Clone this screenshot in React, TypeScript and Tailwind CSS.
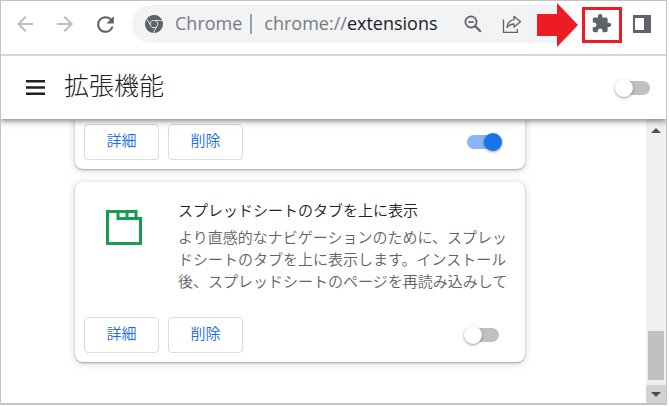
import { MdArrowBack, MdArrowForward, MdExtension, MdRefresh } from "react-icons/md";

const extension = {
  name: "スプレッドシートのタブを上に表示",
  description:
    "より直感的なナビゲーションのために、スプレッドシートのタブを上に表示します。インストール後、スプレッドシートのページを再読み込みして",
};

function ChromeIcon() {
  return (
    <svg viewBox="0 0 24 24" className="size-[18px] shrink-0 fill-[#5f6368]" aria-hidden="true">
      <path d="M12 0C8.21 0 4.831 1.757 2.632 4.501l3.953 6.848A5.454 5.454 0 0 1 12 6.545h10.691A12 12 0 0 0 12 0zM1.931 5.47A11.943 11.943 0 0 0 0 12c0 6.012 4.42 10.991 10.189 11.864l3.953-6.847a5.45 5.45 0 0 1-6.865-2.29zm13.342 2.166a5.446 5.446 0 0 1 1.45 7.09l.002.001h-.002l-5.344 9.257c.206.01.413.016.621.016 6.627 0 12-5.373 12-12 0-1.54-.29-3.011-.818-4.364zM12 16.364a4.364 4.364 0 1 1 0-8.728 4.364 4.364 0 0 1 0 8.728Z" />
    </svg>
  );
}

function ZoomOutIcon() {
  return (
    <svg viewBox="0 0 18 18" className="size-[18px]" fill="none" stroke="#5f6368" strokeWidth="1.7" aria-hidden="true">
      <circle cx="7" cy="7" r="5.6" />
      <path d="M4.300 7h5.400" />
      <path d="M11 11l5.800 5.800" strokeWidth="2.2" />
    </svg>
  );
}

function ShareIcon() {
  return (
    <svg viewBox="0 0 20 20" className="size-5" fill="none" stroke="#5f6368" strokeWidth="1.3" aria-hidden="true">
      <path d="M1.500 5.500v12.800h13.800v-3.300" />
      <path d="M12 2.300l6.500 5.400-6.500 5.400V10c-3 0-5.200 1-7 3.500.5-4 2.900-7.200 7-7.800z" strokeLinejoin="round" />
    </svg>
  );
}

function SidePanelIcon() {
  return (
    <svg viewBox="0 0 18 18" className="size-[18px]" aria-hidden="true">
      <path fillRule="evenodd" d="M0 0h18v18H0zM2 3v12h9V3z" fill="#5f6368" />
    </svg>
  );
}

function TabsIcon() {
  return (
    <svg viewBox="0 0 36 35" className="h-[35px] w-9" fill="none" stroke="#169c53" strokeWidth="3" aria-hidden="true">
      <path d="M1.500 1.500H30V8.500h4.500v25h-33z" />
      <path d="M12 1.500v7h18M21 1.500v7" />
    </svg>
  );
}

function Toolbar() {
  return (
    <div className="relative z-10 flex h-[55px] shrink-0 items-start border-b-2 border-[#d8d8d8] bg-white pt-1 pr-[15px] pl-3">
      <div className="flex h-[38px] items-center gap-4 text-[#babcbe]">
        <button type="button" aria-label="戻る">
          <MdArrowBack size={24} />
        </button>
        <button type="button" aria-label="進む">
          <MdArrowForward size={24} />
        </button>
        <button type="button" aria-label="再読み込み" className="text-[#5f6368]">
          <MdRefresh size={25} />
        </button>
      </div>

      <div className="relative ml-[14px] flex h-[38px] min-w-0 flex-1 items-center rounded-full bg-[#f1f3f4] pr-[52px] pl-[13px] font-['Open_Sans',sans-serif] text-lg font-normal text-[#777b7f]">
        <ChromeIcon />
        <span className="ml-3 pb-0.5">Chrome</span>
        <span className="ml-2 h-5 w-0.5 bg-[#9aa0a6]" />
        <span className="ml-3 flex-1 truncate pb-0.5">
          chrome://<span className="text-[#202124]">extensions</span>
        </span>
        <button type="button" aria-label="ズーム" className="mr-5">
          <ZoomOutIcon />
        </button>
        <button type="button" aria-label="共有">
          <ShareIcon />
        </button>
        {/* Callout arrow over the end of the address bar */}
        <svg viewBox="0 0 41 44" className="absolute -top-0.5 -right-1 h-11 w-[41px] fill-[#ed1c24]" aria-hidden="true">
          <path d="M0 11h20V0l21 22-21 22V33H0z" />
        </svg>
      </div>

      <button
        type="button"
        aria-label="拡張機能"
        className="mt-0.5 ml-2 flex h-9 w-10 items-center justify-center border-3 border-[#ed1c24] pr-0.5 pb-1 text-[#5f6368]"
      >
        <MdExtension size={21} />
      </button>
      <button type="button" aria-label="サイドパネル" className="ml-[11px] flex h-[38px] items-center">
        <SidePanelIcon />
      </button>
    </div>
  );
}

function Switch({ label, defaultChecked = false }: { label: string; defaultChecked?: boolean }) {
  return (
    <input
      type="checkbox"
      role="switch"
      aria-label={label}
      defaultChecked={defaultChecked}
      className="relative h-[14px] w-8 shrink-0 appearance-none rounded-full bg-[#bdc1c6] before:absolute before:-top-0.5 before:-left-[3px] before:size-[18px] before:rounded-full before:bg-white before:shadow-[0_1px_3px_rgba(0,0,0,0.4)] checked:bg-[#8ab4f8] checked:before:left-[17px] checked:before:bg-[#1a73e8]"
    />
  );
}

function CardActions({ name, enabled }: { name: string; enabled: boolean }) {
  return (
    <div className="flex items-center gap-[9px] pr-[26px] pl-[9px]">
      {["詳細", "削除"].map((label) => (
        <button
          key={label}
          type="button"
          className="h-9 w-[75px] rounded border border-[#dadce0] pb-1 text-[15px] text-[#1a6ce8]"
        >
          {label}
        </button>
      ))}
      <span className="flex-1" />
      <Switch label={name} defaultChecked={enabled} />
    </div>
  );
}

function Scrollbar() {
  return (
    <div className="flex w-5 shrink-0 flex-col bg-[#f0f0f0]" aria-hidden="true">
      <div className="flex h-[18px] items-center justify-center pt-1">
        <svg viewBox="0 0 10 5" className="h-[5px] w-2.5 fill-[#505050]">
          <path d="M0 5l5-5 5 5z" />
        </svg>
      </div>
      <div className="flex-1" />
      <div className="mx-0.5 mb-[5px] h-[49px] bg-[#c1c1c1]" />
      <div className="flex h-[18px] items-center justify-center bg-[#d2d2d2]">
        <svg viewBox="0 0 10 5" className="h-[5px] w-2.5 fill-[#505050]">
          <path d="M0 0h10L5 5z" />
        </svg>
      </div>
    </div>
  );
}

const cardShadow = "shadow-[0_1px_2px_rgba(60,64,67,0.4),0_1px_6px_2px_rgba(60,64,67,0.15)]";

export default function App() {
  return (
    <div className="h-screen bg-white pr-0.5 pb-px font-['Noto_Sans_CJK_JP',sans-serif] font-[350]">
      <div className="flex h-full flex-col overflow-hidden border border-b-2 border-[#c3c3c3]">
        <Toolbar />

        <header className="relative flex h-[63px] shrink-0 items-center bg-white pr-4 pl-[25px] shadow-[0_1px_6px_1px_rgba(0,0,0,0.5)]">
          <button type="button" aria-label="メインメニュー">
            <svg viewBox="0 0 19 15" className="h-[15px] w-[19px] fill-[#202124]" aria-hidden="true">
              <path d="M0 0h19v2.600H0zM0 6.200h19v2.600H0zM0 12.400h19V15H0z" />
            </svg>
          </button>
          <h1 className="ml-[19px] flex-1 pb-2 text-[25px] leading-8 font-light text-[#202124]">拡張機能</h1>
          <Switch label="デベロッパー モード" />
        </header>

        <div className="flex min-h-0 flex-1">
          <main className="flex min-w-0 flex-1 flex-col gap-[13px] pr-5 pl-[74px]">
            <section className={`max-w-[450px] rounded-b-lg bg-white pt-[5px] pb-[9px] ${cardShadow}`}>
              <CardActions name="有効な拡張機能" enabled />
            </section>

            <section className={`max-w-[450px] rounded-lg bg-white pt-[17px] pb-[9px] ${cardShadow}`}>
              <div className="flex pr-4 pl-[31px]">
                <div className="mt-[11px] w-[72px] shrink-0">
                  <TabsIcon />
                </div>
                <div className="min-w-0 flex-1 text-[15px] leading-[22px]">
                  <h2 className="text-[#202124]">{extension.name}</h2>
                  <p className="mt-[5px] line-clamp-3 text-[#5f6368]">{extension.description}</p>
                </div>
              </div>
              <div className="mt-[25px]">
                <CardActions name={extension.name} enabled={false} />
              </div>
            </section>
          </main>
          <Scrollbar />
        </div>
      </div>
    </div>
  );
}
